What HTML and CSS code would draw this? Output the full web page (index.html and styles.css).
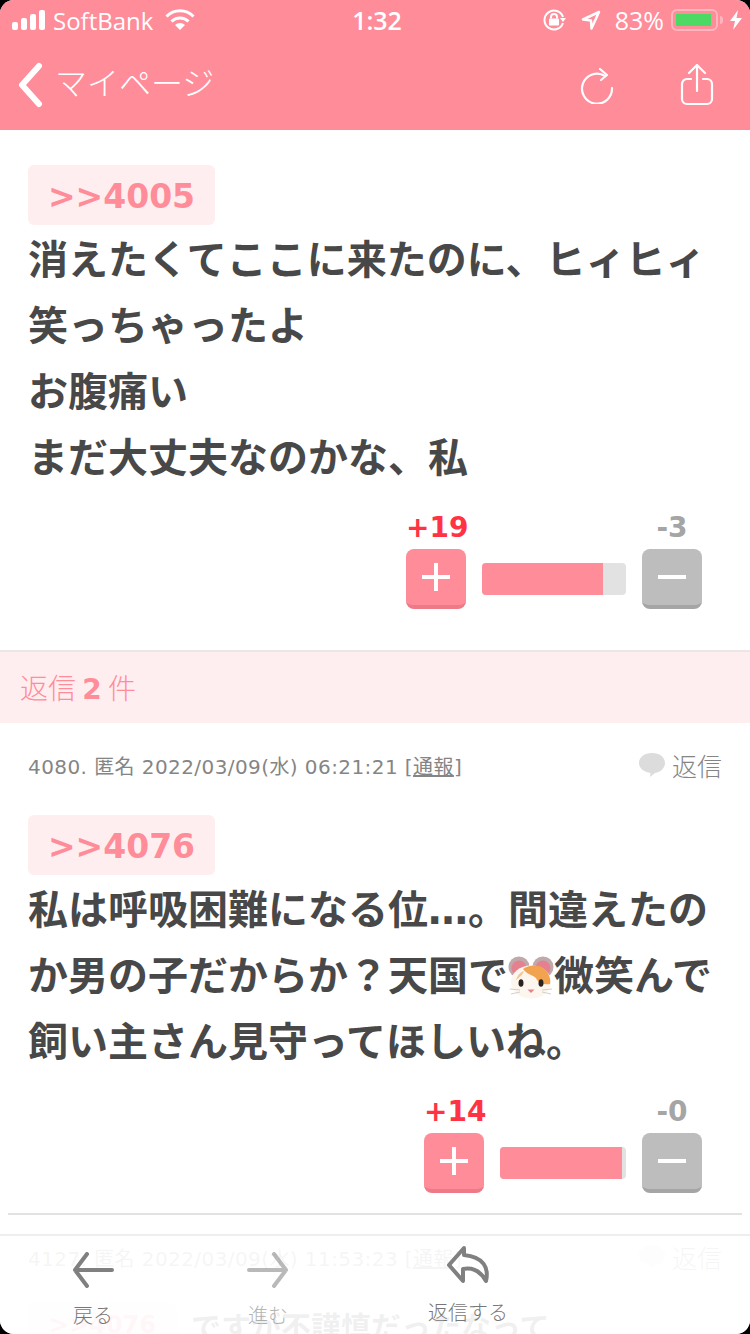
FILE: index.html
```html
<!DOCTYPE html>
<html lang="ja">
<head>
  <meta charset="UTF-8" />
  <meta name="viewport" content="width=device-width, initial-scale=1" />
  <title>マイページ</title>
  <link rel="stylesheet" href="styles.css">
</head>
<body>
  <div id="container">
    <!-- Status bar and navigation -->
    <header id="header">
      <div class="status">
        <div class="status-left">
          <svg class="signal" width="34" height="20" viewBox="0 0 34 20"><rect x="0" y="12" width="6" height="8" rx="2"/><rect x="9" y="8" width="6" height="12" rx="2"/><rect x="18" y="4" width="6" height="16" rx="2"/><rect x="27" y="0" width="6" height="20" rx="2"/></svg>
          <span class="carrier">SoftBank</span>
          <svg class="wifi" width="30" height="22" viewBox="0 0 30 22"><path d="M1.500 7.500a19 19 0 0 1 27 0" /><path d="M6.500 12.500a12 12 0 0 1 17 0" /><path class="wifi-dot" d="M15 21l-5-5a7 7 0 0 1 10 0z"/></svg>
        </div>
        <div class="status-time">1:32</div>
        <div class="status-right">
          <svg width="24" height="22" viewBox="0 0 24 22" class="lock"><path d="M20 14a9.500 9.500 0 1 1 0-6" /><path class="fill" d="M17 9h6l-3 4z"/><rect class="fill" x="6" y="9.500" width="10" height="7" rx="1"/><path d="M8 9.500V8a3 3 0 0 1 6 0v1.500"/></svg>
          <svg width="20" height="20" viewBox="0 0 20 20" class="arrow"><path d="M18 2L2 9.500l8 1 .5 8z"/></svg>
          <span class="percent">83%</span>
          <div class="battery"><div class="battery-level"></div></div>
          <div class="battery-cap"></div>
          <svg width="12" height="20" viewBox="0 0 12 20"><path class="fill" d="M8 0L0 11h5l-2 9 9-12H6.500z"/></svg>
        </div>
      </div>
      <nav class="nav">
        <div class="back">
          <svg width="28" height="46" viewBox="0 0 28 46"><path d="M23 4L6 23l17 19"/></svg>
          <span>マイページ</span>
        </div>
        <div class="nav-icons">
          <svg class="icon-reload" width="34" height="36" viewBox="0 0 34 36"><path d="M25 8a15 15 0 1 0 7 12"/><path d="M20 1l7 6-6 5"/></svg>
          <svg class="icon-share" width="34" height="42" viewBox="0 0 34 42"><path d="M11 15H7a5 5 0 0 0-5 5v15a5 5 0 0 0 5 5h20a5 5 0 0 0 5-5V20a5 5 0 0 0-5-5h-4"/><path d="M17 27V2M9 9l8-8 8 8"/></svg>
        </div>
      </nav>
    </header>

    <!-- Main comment -->
    <section class="comment comment-main">
      <div class="tag">&gt;&gt;4005</div>
      <div class="body-text">消えたくてここに来たのに、ヒィヒィ<br>笑っちゃったよ<br>お腹痛い<br>まだ大丈夫なのかな、私</div>
      <div class="votes votes-wide">
        <div class="vote-col">
          <div class="count count-plus">+19</div>
          <div class="btn btn-plus"><span class="sign-h"></span><span class="sign-v"></span></div>
        </div>
        <div class="bar"><div class="bar-fill" style="width: 84%"></div></div>
        <div class="vote-col">
          <div class="count count-minus">-3</div>
          <div class="btn btn-minus"><span class="sign-h"></span></div>
        </div>
      </div>
    </section>

    <div class="reply-head">返信 <strong>2</strong> 件</div>

    <!-- Replies -->
    <section class="comment comment-reply">
      <div class="meta">
        <div>4080. 匿名 2022/03/09(水) 06:21:21 [<u>通報</u>]</div>
        <div class="reply-link">
          <svg width="28" height="26" viewBox="0 0 28 26"><path d="M14 1c7.500 0 13 4 13 10 0 5-4 9-10 10l-5 4 .5-4C6 20 1 16.500 1 11 1 5 6.500 1 14 1z"/></svg>
          <span>返信</span>
        </div>
      </div>
      <div class="tag">&gt;&gt;4076</div>
      <div class="body-text">私は呼吸困難になる位<span class="dots">…</span>。間違えたの<br>か男の子だからか？天国で<svg class="hamster" width="46" height="44" viewBox="0 0 46 44"><circle cx="11" cy="11" r="10.500" fill="#bfa9ab"/><circle cx="11" cy="12" r="7.500" fill="#e5808f"/><circle cx="35" cy="11" r="10.500" fill="#bfa9ab"/><circle cx="35" cy="12" r="7.500" fill="#e5808f"/><ellipse cx="23" cy="26" rx="20" ry="16.500" fill="#fdf6ee"/><path d="M15 13c5-4 16-5 21 0 5 4 7 10 6 15-5 1-10 0-13-4-1-5-9-4-14-11z" fill="#f2a34f"/><path d="M8 24c2-6 5-8 8-9-1 3-5 7-8 9z" fill="#f6c58c"/><ellipse cx="13" cy="27" rx="2.500" ry="3.800" fill="#2b2320"/><ellipse cx="33" cy="27" rx="2.500" ry="3.800" fill="#2b2320"/><path d="M19.500 33.500h7l-3.500 3.500z" fill="#e5808f"/><path d="M2 33l10 1M3 38l9-2M44 33l-10 1M43 38l-9-2" stroke="#d5cfc9" stroke-width="1" fill="none"/></svg>微笑んで<br>飼い主さん見守ってほしいね。</div>
      <div class="votes votes-narrow">
        <div class="vote-col">
          <div class="count count-plus">+14</div>
          <div class="btn btn-plus"><span class="sign-h"></span><span class="sign-v"></span></div>
        </div>
        <div class="bar"><div class="bar-fill" style="width: 97%"></div></div>
        <div class="vote-col">
          <div class="count count-minus">-0</div>
          <div class="btn btn-minus"><span class="sign-h"></span></div>
        </div>
      </div>
    </section>

    <div class="divider"></div>

    <section class="comment comment-last">
      <div class="meta">
        <div>4127. 匿名 2022/03/09(水) 11:53:23 [<u>通報</u>]</div>
        <div class="reply-link">
          <svg width="28" height="26" viewBox="0 0 28 26"><path d="M14 1c7.500 0 13 4 13 10 0 5-4 9-10 10l-5 4 .5-4C6 20 1 16.500 1 11 1 5 6.500 1 14 1z"/></svg>
          <span>返信</span>
        </div>
      </div>
      <div class="last-row">
        <div class="tag tag-small">&gt;&gt;4076</div>
        <div class="body-text">ですが不謹慎だったなって</div>
      </div>
    </section>

    <!-- Bottom toolbar over the content -->
    <footer id="toolbar">
      <div class="tool tool-back">
        <svg width="42" height="36" viewBox="0 0 42 36"><path d="M40 18H3M15 2L3 18l12 16"/></svg>
        <span>戻る</span>
      </div>
      <div class="tool tool-forward">
        <svg width="42" height="36" viewBox="0 0 42 36"><path d="M2 18h37M27 2l12 16-12 16"/></svg>
        <span>進む</span>
      </div>
      <div class="tool tool-reply">
        <svg width="44" height="38" viewBox="0 0 44 38"><path d="M18 2L3 19l14 16V23c10-2 18 3 23 12 3-13-2-24-22-26z" /></svg>
        <span>返信する</span>
      </div>
    </footer>
  </div>
</body>
</html>
```
FILE: styles.css
```css
/* Basic resets */
body, html {
  margin: 0;
  padding: 0;
  height: 100%;
  overflow: hidden;
  background: #000;
  font-family: "Noto Sans CJK JP", "Noto Sans", sans-serif;
}

#container {
  width: 750px;
  height: 1334px;
  position: relative;
  overflow: hidden;
  background: #fff;
  border-radius: 14px;
  color: #444;
}

/* Header */
#header {
  height: 130px;
  background: #ff8c99;
  color: #fff;
}

.status {
  height: 40px;
  padding: 0 8px 0 12px;
  display: grid;
  grid-template-columns: 1fr auto 1fr;
  align-items: center;
}

.status-left, .status-right {
  display: flex;
  align-items: center;
}

.status-right {
  justify-content: flex-end;
}

.signal rect { fill: #fff; }

.carrier {
  font-family: "Open Sans", "Liberation Sans", sans-serif;
  font-size: 24px;
  margin-left: 7px;
}

.wifi { margin-left: 12px; }

.status svg path { fill: none; stroke: #fff; stroke-width: 3; }
.status svg path.fill, .status svg rect.fill, .status svg path.wifi-dot { fill: #fff; stroke: none; }
.status svg.arrow path { stroke-width: 2.500; stroke-linejoin: round; }
.status svg.lock path { stroke-width: 2; }

.status-time {
  font-family: "Open Sans", "Liberation Sans", sans-serif;
  font-size: 25px;
  font-weight: 600;
}

.arrow { margin-left: 14px; }

.percent {
  font-family: "Open Sans", "Liberation Sans", sans-serif;
  font-size: 25px;
  margin-left: 14px;
}

.battery {
  width: 47px;
  height: 22px;
  box-sizing: border-box;
  margin-left: 7px;
  padding: 3px;
  border: 2px solid #ffb5bd;
  border-radius: 6px;
}

.battery-level {
  width: 35px;
  height: 100%;
  background: #4cd964;
}

.battery-cap {
  width: 3px;
  height: 8px;
  margin: 0 7px 0 2px;
  background: #ffb5bd;
  border-radius: 0 3px 3px 0;
}

.nav {
  height: 90px;
  padding: 0 36px 0 16px;
  display: flex;
  justify-content: space-between;
  align-items: center;
}

.nav svg path {
  fill: none;
  stroke: #fff;
  stroke-linecap: round;
  stroke-linejoin: round;
}

.back {
  display: flex;
  align-items: center;
}

.back svg path { stroke-width: 6; }

.back span {
  font-size: 32px;
  font-weight: 300;
  margin: 0 0 8px 11px;
}

.nav-icons {
  display: flex;
  align-items: center;
  gap: 66px;
}

.nav-icons svg path { stroke-width: 2.200; }
.icon-reload { margin-top: 2px; }

/* Comments */
.comment {
  padding: 0 28px;
}

.comment-main {
  height: 520px;
  box-sizing: border-box;
  padding-top: 35px;
}

.tag {
  width: 187px;
  height: 60px;
  background: #ffeef0;
  border-radius: 6px;
  color: #ff8c99;
  font-family: "DejaVu Sans", sans-serif;
  font-weight: bold;
  font-size: 33px;
  line-height: 64px;
  text-align: center;
}

.tag-small {
  width: 149px;
  flex-shrink: 0;
  font-size: 24px;
  line-height: 44px;
}

.body-text {
  font-size: 40px;
  font-weight: 700;
  line-height: 66px;
  color: #484848;
  white-space: nowrap;
  margin-top: -1px;
}

/* keep the ellipsis and the emoji from stretching their lines */
.dots {
  font-family: "DejaVu Sans", sans-serif;
  line-height: 0;
}

.hamster {
  margin: -14px 0 -10px;
  vertical-align: 0;
}

/* Votes */
.votes {
  display: flex;
  justify-content: flex-end;
  align-items: flex-end;
  gap: 16px;
  padding-right: 20px;
  margin-top: 25px;
}

.vote-col {
  width: 60px;
}

.count {
  font-family: "DejaVu Sans", sans-serif;
  font-weight: bold;
  font-size: 28px;
  line-height: 30px;
  height: 36px;
  text-align: center;
  white-space: nowrap;
}

.count-plus { color: #ff3344; }
.count-minus { color: #a5a5a5; }

.btn {
  width: 60px;
  height: 60px;
  box-sizing: border-box;
  border-radius: 8px;
  position: relative;
}

.btn-plus {
  background: #ff8c99;
  border-bottom: 4px solid #ee7a87;
}

.btn-minus {
  background: #bdbdbd;
  border-bottom: 4px solid #a5a5a5;
}

/* plus and minus strokes sit on top of the button */
.sign-h, .sign-v {
  position: absolute;
  background: #fff;
}

.sign-h {
  left: 16px;
  top: 26px;
  width: 28px;
  height: 4px;
}

.sign-v {
  left: 28px;
  top: 14px;
  width: 4px;
  height: 28px;
}

.bar {
  height: 32px;
  background: #e2e2e2;
  border-radius: 4px;
  overflow: hidden;
  margin-bottom: 14px;
}

.votes-wide .bar { width: 144px; }
.votes-narrow .bar { width: 126px; }

.bar-fill {
  height: 100%;
  background: #ff8c99;
}

.reply-head {
  height: 71px;
  border-top: 2px solid #ebe6e7;
  background: #ffeef0;
  color: #ff8c99;
  font-size: 28px;
  font-weight: 300;
  line-height: 71px;
  padding-left: 20px;
}

.reply-head strong {
  font-family: "DejaVu Sans", sans-serif;
  font-weight: bold;
}

.meta {
  display: flex;
  justify-content: space-between;
  align-items: center;
  height: 42px;
  font-family: "DejaVu Sans", "Noto Sans CJK JP", sans-serif;
  font-size: 20px;
  letter-spacing: 0.42px;
  color: #858585;
  white-space: nowrap;
}

.reply-link {
  display: flex;
  align-items: center;
  gap: 6px;
  font-family: "Noto Sans CJK JP", sans-serif;
  font-size: 25px;
  font-weight: 300;
  letter-spacing: 0;
}

.reply-link svg { margin-left: -2px; }
.reply-link svg path { fill: #dcdcdc; }

.comment-reply {
  height: 490px;
  box-sizing: border-box;
  padding-top: 21px;
}

.comment-reply .tag { margin-top: 29px; }

.divider {
  height: 2px;
  margin: 0 8px;
  background: #e2e2e2;
}

.comment-last {
  padding-top: 21px;
}

.last-row {
  display: flex;
  gap: 14px;
  margin-top: 25px;
}

.last-row .body-text {
  margin: 0;
  font-size: 30px;
  line-height: 44px;
}

/* Toolbar */
#toolbar {
  position: absolute;
  left: 0;
  right: 0;
  bottom: 0;
  height: 98px;
  border-top: 2px solid #eee;
  background: rgba(255, 255, 255, 0.92);
}

.tool {
  position: absolute;
  display: flex;
  flex-direction: column;
  align-items: center;
  font-size: 20px;
  font-weight: 300;
  color: #777;
  white-space: nowrap;
}

.tool svg path {
  fill: none;
  stroke: #808080;
  stroke-width: 4;
  stroke-linecap: round;
  stroke-linejoin: round;
}

.tool span { line-height: 30px; margin-top: 12px; }

.tool-back { left: 72px; top: 16px; }
.tool-forward { left: 247px; top: 16px; opacity: 0.55; }
.tool-reply { left: 428px; top: 10px; }
.tool-reply span { margin-top: 13px; }
```
